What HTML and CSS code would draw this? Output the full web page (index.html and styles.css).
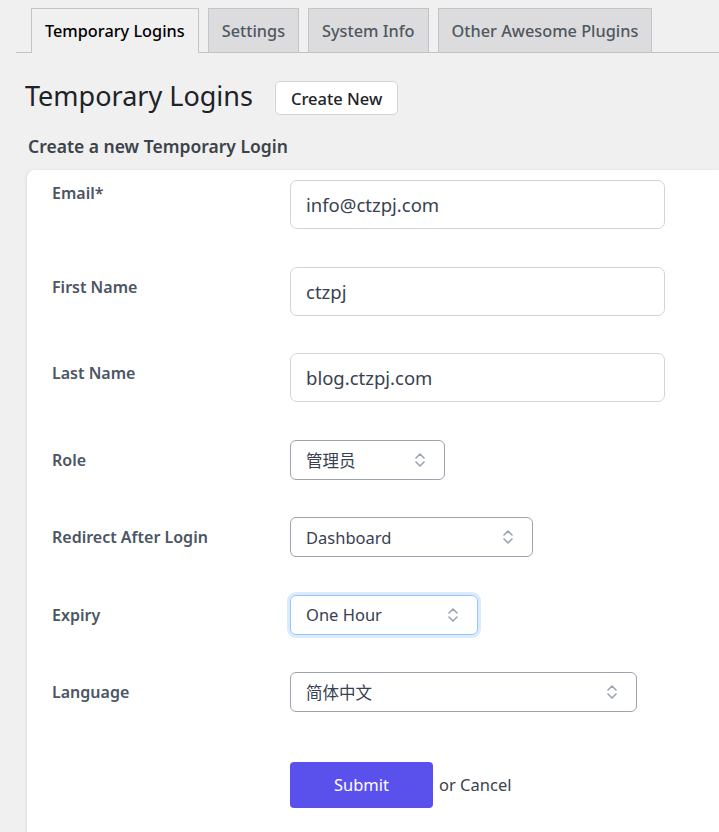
FILE: index.html
```html
<!DOCTYPE html>
<html>
<head>
<meta charset="utf-8">
<link rel="stylesheet" href="styles.css">
</head>
<body>
<div class="wrap">
  <nav class="tabs">
    <a class="tab active">Temporary Logins</a>
    <a class="tab">Settings</a>
    <a class="tab">System Info</a>
    <a class="tab">Other Awesome Plugins</a>
  </nav>
  <div class="head">
    <h1 class="title">Temporary Logins</h1>
    <button class="btn-new">Create New</button>
  </div>
  <h2 class="subtitle">Create a new Temporary Login</h2>
  <div class="card">
    <div class="row row-first">
      <label class="label">Email*</label>
      <div class="input">info@ctzpj.com</div>
    </div>
    <div class="row">
      <label class="label">First Name</label>
      <div class="input">ctzpj</div>
    </div>
    <div class="row">
      <label class="label">Last Name</label>
      <div class="input">blog.ctzpj.com</div>
    </div>
    <div class="row">
      <label class="label">Role</label>
      <div class="select sel-role"><span>管理员</span><svg class="chev" viewBox="0 0 12 20" width="12" height="20"><path d="M2 8 L6 4 L10 8 M2 12 L6 16 L10 12" fill="none" stroke="#9ca3af" stroke-width="1.6" stroke-linecap="round" stroke-linejoin="round"/></svg></div>
    </div>
    <div class="row">
      <label class="label">Redirect After Login</label>
      <div class="select sel-redirect"><span>Dashboard</span><svg class="chev" viewBox="0 0 12 20" width="12" height="20"><path d="M2 8 L6 4 L10 8 M2 12 L6 16 L10 12" fill="none" stroke="#9ca3af" stroke-width="1.6" stroke-linecap="round" stroke-linejoin="round"/></svg></div>
    </div>
    <div class="row">
      <label class="label">Expiry</label>
      <div class="select sel-expiry focus"><span>One Hour</span><svg class="chev" viewBox="0 0 12 20" width="12" height="20"><path d="M2 8 L6 4 L10 8 M2 12 L6 16 L10 12" fill="none" stroke="#9ca3af" stroke-width="1.6" stroke-linecap="round" stroke-linejoin="round"/></svg></div>
    </div>
    <div class="row">
      <label class="label">Language</label>
      <div class="select sel-lang"><span>简体中文</span><svg class="chev" viewBox="0 0 12 20" width="12" height="20"><path d="M2 8 L6 4 L10 8 M2 12 L6 16 L10 12" fill="none" stroke="#9ca3af" stroke-width="1.6" stroke-linecap="round" stroke-linejoin="round"/></svg></div>
    </div>
    <div class="row row-submit">
      <span class="label"></span>
      <div class="actions">
        <button class="btn-submit">Submit</button>
        <span class="cancel">or Cancel</span>
      </div>
    </div>
  </div>
</div>
</body>
</html>
```

FILE: styles.css
```css
html, body {
  margin: 0;
  padding: 0;
  background: #f0f0f1;
  font-family: "Noto Sans", "Noto Sans CJK SC", sans-serif;
  color: #3c434a;
  overflow: hidden;
}
.wrap {
  padding: 8px 0 0 16px;
}
.tabs {
  display: flex;
  gap: 9px;
  padding-left: 15px;
  border-bottom: 1px solid #c3c4c7;
  height: 44px;
}
.tab {
  display: flex;
  align-items: center;
  padding: 0 13px;
  height: 43px;
  border: 1px solid #c3c4c7;
  border-bottom: none;
  background: #dcdcde;
  color: #50575e;
  font-size: 16.3px;
  font-weight: 500;
}
.tab.active {
  background: #f0f0f1;
  color: #000;
  height: 44px;
  margin-bottom: -1px;
}
.head {
  display: flex;
  align-items: center;
  margin-top: 28px;
  margin-left: 9px;
  gap: 22px;
}
.title {
  margin: 0;
  font-size: 27px;
  font-weight: 400;
  color: #1d2327;
  line-height: 34px;
  position: relative;
  top: -2px;
}
.btn-new {
  font-family: inherit;
  font-size: 16.5px;
  font-weight: 500;
  color: #1d2327;
  background: #fff;
  border: 1px solid #d4d4d8;
  border-radius: 5px;
  height: 34px;
  padding: 0 15px;
}
.subtitle {
  margin: 19px 0 0 12px;
  font-size: 17.5px;
  font-weight: 600;
  color: #3c434a;
  line-height: 24px;
}
.card {
  margin-top: 12px;
  margin-left: 11px;
  background: #fff;
  border-top-left-radius: 8px;
  box-shadow: -1px 0 3px rgba(0,0,0,0.08);
  padding: 10px 0 60px 25px;
}
.row {
  display: flex;
  align-items: flex-start;
  margin-bottom: 37.5px;
}
.label {
  width: 238px;
  flex: none;
  font-size: 16px;
  font-weight: 600;
  color: #4b5563;
  line-height: 22px;
  padding-top: 9px;
}
.row-first .label {
  padding-top: 2px;
}
.input {
  box-sizing: border-box;
  width: 375px;
  height: 49px;
  border: 1px solid #d1d5db;
  border-radius: 7px;
  padding: 0 15px;
  display: flex;
  align-items: center;
  font-size: 18.5px;
  color: #374151;
}
.select {
  box-sizing: border-box;
  height: 40px;
  border: 1px solid #9ca3af;
  border-radius: 6px;
  padding: 0 18px 0 15px;
  display: flex;
  align-items: center;
  justify-content: space-between;
  font-size: 16.5px;
  color: #374151;
}
.select.focus {
  border-color: #93c5fd;
  box-shadow: 0 0 0 3px #dbeafe;
}
.chev { flex: none; }
.sel-role { width: 155px; }
.sel-redirect { width: 243px; }
.sel-expiry { width: 188px; }
.sel-lang { width: 347px; }
.row-submit { margin-bottom: 0; margin-top: 49.5px; }
.actions {
  display: flex;
  align-items: center;
  gap: 6px;
}
.btn-submit {
  font-family: inherit;
  width: 143px;
  height: 46px;
  background: #5a51ec;
  color: #fff;
  border: none;
  border-radius: 4px;
  font-size: 16.5px;
}
.cancel {
  font-size: 16.5px;
  color: #3c434a;
}
```
